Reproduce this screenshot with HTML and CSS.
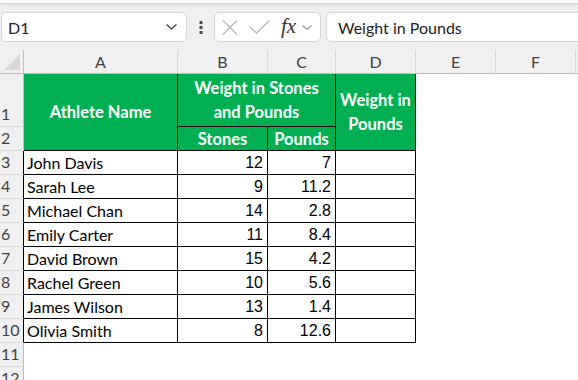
FILE: index.html
```html
<!DOCTYPE html>
<html lang="en">
<head>
  <meta charset="UTF-8" />
  <title>Athlete Weights</title>
  <link rel="stylesheet" href="styles.css">
</head>
<body>
  <div class="ribbon-edge"></div>

  <div class="formula-bar">
    <div class="name-box">
      <span>D1</span>
      <svg class="chev" width="11" height="6" viewBox="0 0 11 6"><polyline points="0.5,0.5 5.5,5 10.5,0.5" /></svg>
    </div>
    <svg class="grip" width="4" height="13" viewBox="0 0 4 13">
      <rect x="0.5" y="0" width="3" height="3" />
      <rect x="0.5" y="5" width="3" height="3" />
      <rect x="0.5" y="10" width="3" height="3" />
    </svg>
    <div class="fx-box">
      <svg class="icon-x" width="16" height="15" viewBox="0 0 16 15"><path d="M1 0.5 L15 14.5 M15 0.5 L1 14.5" /></svg>
      <svg class="icon-ok" width="21" height="14" viewBox="0 0 21 14"><polyline points="0.5,6.5 7.5,13 20.5,0.5" /></svg>
      <span class="fx">fx</span>
      <svg class="chev small" width="10" height="5" viewBox="0 0 10 5"><polyline points="0.5,0.5 5,4.5 9.5,0.5" /></svg>
    </div>
    <div class="formula-input">Weight in Pounds</div>
  </div>

  <div class="sheet">
    <!-- column headers -->
    <div class="corner"><span class="tri"></span></div>
    <div class="col-head">A</div>
    <div class="col-head">B</div>
    <div class="col-head">C</div>
    <div class="col-head">D</div>
    <div class="col-head">E</div>
    <div class="col-head">F</div>
    <div class="col-head last"></div>

    <!-- row 1 -->
    <div class="row-head">1</div>
    <div class="hdr span-rows">Athlete Name</div>
    <div class="hdr span-cols">Weight in Stones<br>and Pounds</div>
    <div class="hdr span-rows">Weight in<br>Pounds</div>
    <div></div><div></div><div></div>

    <!-- row 2 -->
    <div class="row-head">2</div>
    <div class="hdr">Stones</div>
    <div class="hdr">Pounds</div>
    <div></div><div></div><div></div>

    <div class="row-head data">3</div>
    <div class="cell">John Davis</div><div class="cell num">12</div><div class="cell num">7</div><div class="cell"></div>
    <div></div><div></div><div></div>

    <div class="row-head data">4</div>
    <div class="cell">Sarah Lee</div><div class="cell num">9</div><div class="cell num">11.2</div><div class="cell"></div>
    <div></div><div></div><div></div>

    <div class="row-head data">5</div>
    <div class="cell">Michael Chan</div><div class="cell num">14</div><div class="cell num">2.8</div><div class="cell"></div>
    <div></div><div></div><div></div>

    <div class="row-head data">6</div>
    <div class="cell">Emily Carter</div><div class="cell num">11</div><div class="cell num">8.4</div><div class="cell"></div>
    <div></div><div></div><div></div>

    <div class="row-head data">7</div>
    <div class="cell">David Brown</div><div class="cell num">15</div><div class="cell num">4.2</div><div class="cell"></div>
    <div></div><div></div><div></div>

    <div class="row-head data">8</div>
    <div class="cell">Rachel Green</div><div class="cell num">10</div><div class="cell num">5.6</div><div class="cell"></div>
    <div></div><div></div><div></div>

    <div class="row-head data">9</div>
    <div class="cell">James Wilson</div><div class="cell num">13</div><div class="cell num">1.4</div><div class="cell"></div>
    <div></div><div></div><div></div>

    <div class="row-head data">10</div>
    <div class="cell">Olivia Smith</div><div class="cell num">8</div><div class="cell num">12.6</div><div class="cell"></div>
    <div></div><div></div><div></div>

    <div class="row-head">11</div>
    <div></div><div></div><div></div><div></div><div></div><div></div><div></div>

    <div class="row-head">12</div>
    <div></div><div></div><div></div><div></div><div></div><div></div><div></div>
  </div>
</body>
</html>
```

FILE: styles.css
```css
:root {
  --green: #00b050;
  --chrome: #f0f0f0;
  --head-line: #bdbdbd;
  --soft-line: #dadada;
  --label: #424242;
}

* {
  box-sizing: border-box;
}

body {
  margin: 0;
  width: 578px;
  height: 380px;
  overflow: hidden;
  background: #fff;
  font-family: Lato, "Liberation Sans", sans-serif;
  font-size: 16px;
  color: #000;
}

.ribbon-edge {
  height: 3px;
  background: #fff;
  box-shadow: 0 1px 3px rgba(0,0,0,0.18);
  position: relative;
}

.formula-bar {
  display: flex;
  align-items: center;
  height: 47px;
  padding: 9px 0 8px 1px;
  background: var(--chrome);
}

.name-box, .fx-box, .formula-input {
  height: 30px;
  background: #fff;
  border: 1px solid #d6d6d6;
  border-radius: 5px;
  display: flex;
  align-items: center;
}

.name-box {
  width: 186px;
  padding: 0 9px 0 6px;
  justify-content: space-between;
  color: #222;
}

.chev polyline {
  fill: none;
  stroke: #3c3c3c;
  stroke-width: 1.2;
}

.chev.small polyline {
  stroke: #9a9a9a;
}

.grip {
  margin: 0 11px 0 12px;
  fill: #4a4a4a;
}

.fx-box {
  width: 107px;
  padding: 0 4px 0 7px;
}

.icon-x path, .icon-ok polyline {
  fill: none;
  stroke: #b8b8b8;
  stroke-width: 1.3;
}

.icon-ok {
  margin-left: 11px;
}

.fx {
  font-family: "Liberation Serif", serif;
  font-style: italic;
  font-size: 21px;
  color: #333;
  margin-left: 11px;
  margin-top: -2px;
}

.fx-box .chev {
  margin-left: 6px;
}

.formula-input {
  flex: 1;
  margin-left: 5px;
  margin-right: -10px;
  padding-left: 11px;
  color: #222;
}

/* grid */

.sheet {
  display: grid;
  grid-template-columns: 24px 154px 90px 68px 80px 80px 80px 1fr;
  grid-template-rows: 24px 53px 24px repeat(10, 24px);
  background: #fff;
}

.corner, .col-head {
  background: var(--chrome);
  border-bottom: 1px solid var(--head-line);
}

.corner {
  border-right: 1px solid var(--head-line);
  position: relative;
}

.tri {
  position: absolute;
  left: 4px;
  bottom: 3px;
  width: 0;
  height: 0;
  border-left: 16px solid transparent;
  border-bottom: 16px solid #d8d8d8;
}

.col-head {
  border-right: 1px solid var(--soft-line);
  text-align: center;
  line-height: 23px;
  color: var(--label);
}

.col-head.last {
  border-right: none;
}

.row-head {
  background: var(--chrome);
  border-right: 1px solid var(--head-line);
  border-bottom: 1px solid var(--soft-line);
  color: var(--label);
  display: flex;
  align-items: flex-end;
  padding: 0 0 3px 1px;
  line-height: 18px;
}

.row-head.data {
  border-right-color: #000;
}

.hdr {
  background: var(--green);
  color: #fff;
  font-weight: bold;
  font-size: 16.5px;
  border-right: 1px solid #000;
  border-bottom: 1px solid #000;
  display: flex;
  align-items: center;
  justify-content: center;
  text-align: center;
  line-height: 24px;
}

.span-rows {
  grid-row: span 2;
}

.span-cols {
  grid-column: span 2;
}

.cell {
  border-right: 1px solid #000;
  border-bottom: 1px solid #000;
  padding: 0 4px 0 3px;
  line-height: 23px;
  white-space: nowrap;
  overflow: hidden;
}

.num {
  text-align: right;
  font-family: "Liberation Sans", Arial, sans-serif;
}
```
